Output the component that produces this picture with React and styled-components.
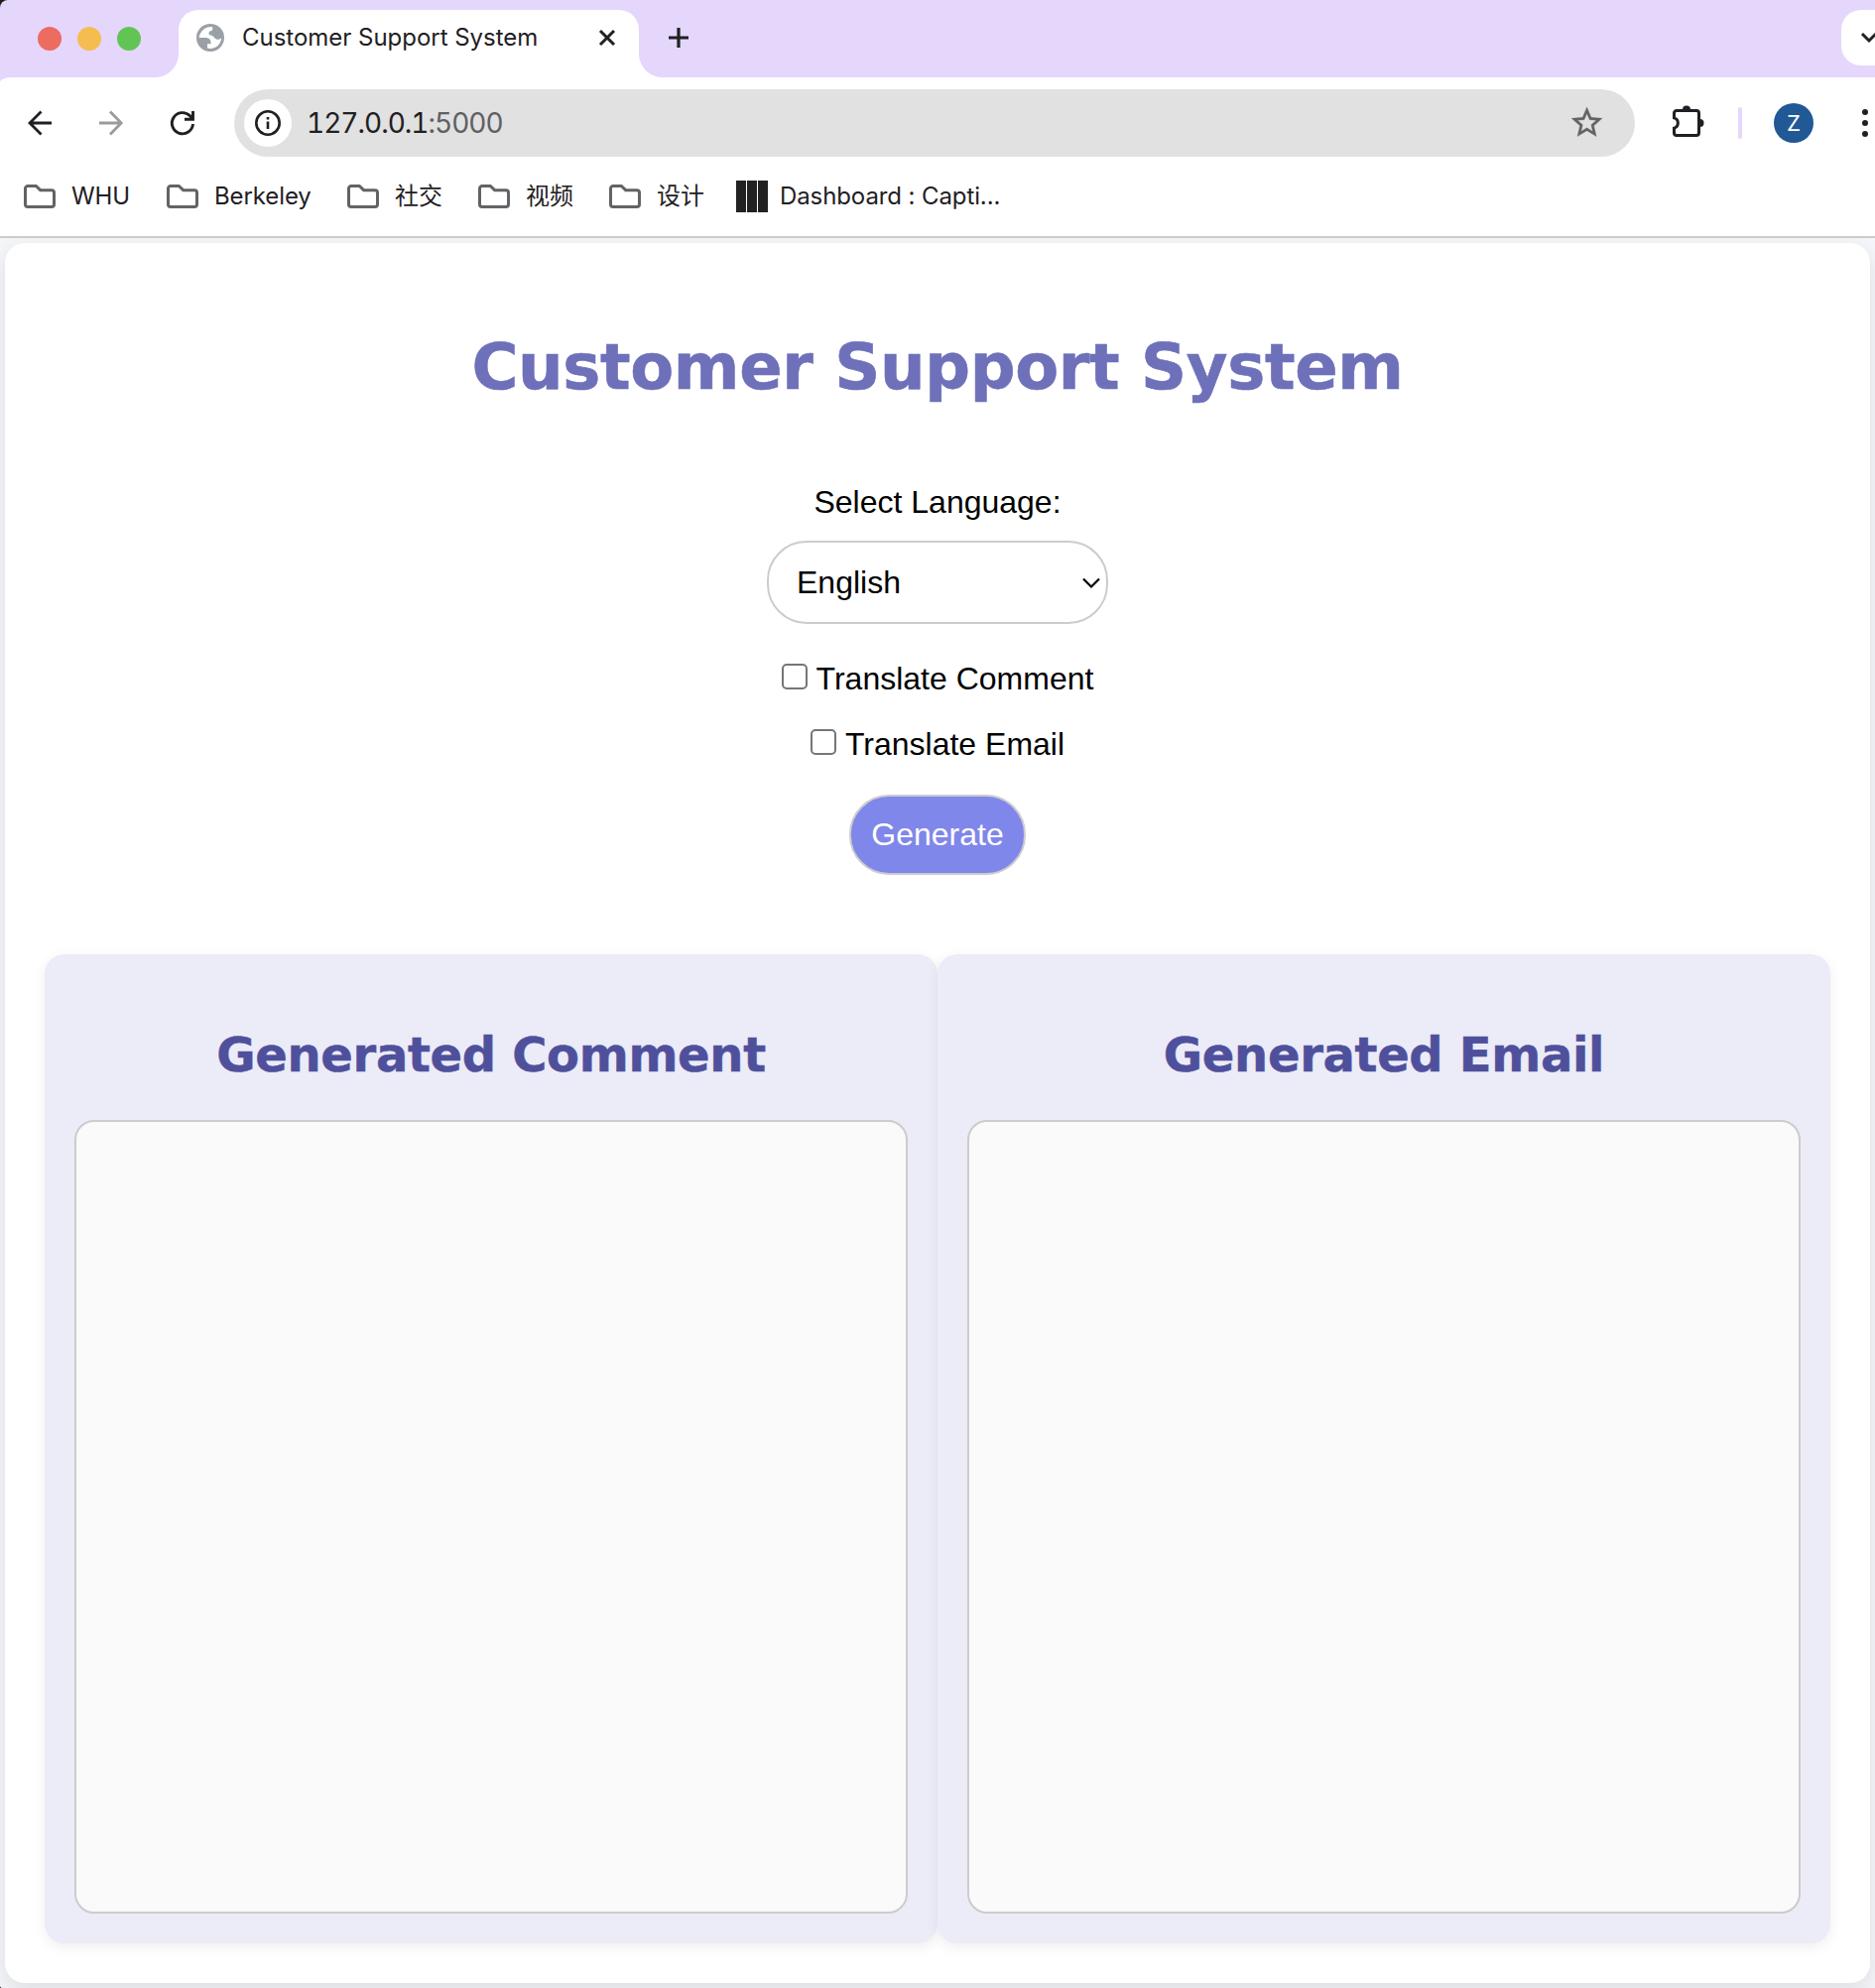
import React, { useState } from 'react';
import styled, { createGlobalStyle } from 'styled-components';

const Global = createGlobalStyle`
  *, *::before, *::after { box-sizing: border-box; }
  body { margin: 0; background: #1c1c1c; color: #000; }
`;

const uiFont = `Inter, "Noto Sans CJK SC", sans-serif`;
const pageFont = `"Liberation Sans", Arial, sans-serif`;
const headFont = `Verdana, "DejaVu Sans", sans-serif`;

const Window = styled.div`
  width: 1890px;
  height: 2004px;
  overflow: hidden;
  display: flex;
  flex-direction: column;
  border-radius: 8px 0 0 3px;
  background: #e5d6fb;
`;

const TabStrip = styled.header`
  height: 78px;
  display: flex;
  align-items: flex-start;
  padding: 10px 0 0 38px;
`;

const Lights = styled.div`
  display: flex;
  gap: 16px;
  margin: 17px 38px 0 0;
`;

const Light = styled.span`
  width: 24px;
  height: 24px;
  border-radius: 50%;
  background: ${(p) => p.$color};
`;

const Tab = styled.div`
  position: relative;
  width: 464px;
  height: 68px;
  display: flex;
  align-items: center;
  padding: 0 24px 12px 18px;
  background: #fff;
  border-radius: 20px 20px 0 0;
  font: 400 24px/30px ${uiFont};
  letter-spacing: -0.02px;
  color: #1f2023;

  &::before,
  &::after {
    content: '';
    position: absolute;
    bottom: 0;
    width: 24px;
    height: 24px;
  }
  &::before {
    left: -24px;
    background: radial-gradient(circle at 0 0, transparent 23.5px, #fff 24.5px);
  }
  &::after {
    right: -24px;
    background: radial-gradient(circle at 100% 0, transparent 23.5px, #fff 24.5px);
  }
`;

const TabTitle = styled.span`
  flex: 1;
  margin-left: 18px;
  white-space: nowrap;
`;

const Glyph = styled.svg`
  display: block;
  flex: none;
  overflow: visible;
`;

const NewTab = styled.div`
  margin: 18px 0 0 30px;
`;

const TabSearch = styled.div`
  width: 34px;
  height: 56px;
  margin-left: auto;
  padding: 22px 0 0 19px;
  border-radius: 20px 0 0 20px;
  background: #fff;
`;

const Toolbar = styled.div`
  height: 92px;
  display: flex;
  align-items: center;
  padding-left: 27px;
  background: #fff;
  border-top-left-radius: 12px 5px;
`;

const NavButtons = styled.div`
  display: flex;
  gap: 46px;
  margin-right: 39px;
`;

const AddressBar = styled.div`
  width: 1412px;
  height: 68px;
  display: flex;
  align-items: center;
  padding: 0 30px 0 10px;
  border-radius: 34px;
  background: #e1e1e1;
`;

const InfoBadge = styled.div`
  width: 48px;
  height: 48px;
  display: grid;
  place-items: center;
  border-radius: 50%;
  background: #fff;
`;

const Url = styled.div`
  flex: 1;
  margin-left: 15px;
  font: 400 28px/34px ${uiFont};
  font-variant-numeric: tabular-nums;
  letter-spacing: -1px;
  color: #1f2023;
`;

const Port = styled.span`
  color: #5f6064;
`;

const Extensions = styled.div`
  margin: 0 0 4px 38px;
`;

const Divider = styled.div`
  width: 4px;
  height: 32px;
  margin: 0 32px 0 34px;
  border-radius: 2px;
  background: #e5d6fb;
`;

const Avatar = styled.div`
  width: 40px;
  height: 40px;
  margin-right: 49px;
  border-radius: 50%;
  background: #215896;
  color: #fff;
  font: 400 22px/41px Roboto, sans-serif;
  text-align: center;
`;

const Bookmarks = styled.nav`
  height: 70px;
  display: flex;
  align-items: flex-start;
  padding: 11px 0 0 24px;
  background: #fff;
  border-bottom: 2px solid #ccc;
`;

const Bookmark = styled.div`
  display: flex;
  align-items: center;
  height: 34px;
  width: ${(p) => p.$width}px;
  gap: ${(p) => p.$gap || 16}px;
  font: 400 24px/34px ${uiFont};
  letter-spacing: -0.1px;
  color: #1f2023;
  white-space: nowrap;
`;

const Bars = styled.span`
  display: flex;
  gap: 1px;
`;

const Bar = styled.span`
  width: 10px;
  height: 32px;
  background: #222;
`;

const Page = styled.main`
  flex: 1;
  padding: 5px;
  overflow: hidden;
  background: #f4f6fa;
`;

const Container = styled.div`
  height: 1754px;
  display: flex;
  flex-direction: column;
  align-items: center;
  padding: 40px;
  border-radius: 20px;
  background: #fff;
  box-shadow: 0 8px 24px rgba(0, 0, 0, 0.1);
  font: 400 32px/36px ${pageFont};
`;

const Title = styled.h1`
  margin: 46px 0 0;
  font: 700 64px/78px ${headFont};
  letter-spacing: -0.36px;
  color: #6e70b9;
  -webkit-text-stroke: 0.6px #6e70b9;
`;

const FieldLabel = styled.label`
  margin-top: 79px;
`;

const SelectBox = styled.div`
  width: 344px;
  height: 84px;
  display: flex;
  align-items: center;
  justify-content: space-between;
  margin-top: 21px;
  padding: 0 6px 0 28px;
  border: 2px solid #ccc;
  border-radius: 40px;
`;

const CheckRow = styled.label`
  display: flex;
  align-items: center;
  margin-top: ${(p) => p.$top}px;
  gap: 9px;
`;

const Checkbox = styled.input`
  appearance: none;
  width: 26px;
  height: 26px;
  margin: 0 0 5px;
  border: 2px solid #767676;
  border-radius: 5px;
  background: #fff;
`;

const GenerateButton = styled.button`
  height: 81px;
  margin: 33px 0 80px;
  padding: 0 20px 2px;
  border: 2px solid #ccc;
  border-radius: 40px;
  background: #8087ea;
  color: #fff;
  font: 400 32px/36px ${pageFont};
`;

const Panels = styled.div`
  width: 100%;
  display: grid;
  grid-template-columns: 1fr 1fr;
`;

const Panel = styled.section`
  height: 997px;
  display: flex;
  flex-direction: column;
  padding: 30px;
  border-radius: 20px;
  background: #ecebf8;
  box-shadow: 0 4px 14px rgba(0, 0, 0, 0.07);
`;

const PanelTitle = styled.h2`
  margin: 42px 0 37px;
  font: 700 48px/58px ${headFont};
  letter-spacing: -0.33px;
  text-align: center;
  color: #4f509c;
  -webkit-text-stroke: 0.5px #4f509c;
`;

const Output = styled.textarea`
  display: block;
  width: 100%;
  height: 800px;
  resize: none;
  outline: none;
  border: 2px solid #ccc;
  border-radius: 20px;
  background: #fafafa;
`;

const Folder = () => (
  <Glyph width="32" height="24" viewBox="0 0 32 24" fill="none" stroke="#626366" strokeWidth="3">
    <path d="M4 1.5h8.3l4.4 4.2H28a2.5 2.5 0 0 1 2.5 2.5V20a2.5 2.5 0 0 1-2.5 2.5H4A2.5 2.5 0 0 1 1.5 20V4A2.5 2.5 0 0 1 4 1.5z" />
  </Glyph>
);

const folders = [
  ['WHU', 144],
  ['Berkeley', 182],
  ['社交', 132],
  ['视频', 132],
  ['设计', 128],
];

function Browser() {
  return (
    <>
      <TabStrip>
        <Lights>
          <Light $color="#ed6b5f" />
          <Light $color="#f5bd4f" />
          <Light $color="#62c454" />
        </Lights>
        <Tab>
          <Glyph width="28" height="28" viewBox="0 0 28 28">
            <circle cx="14" cy="14" r="14" fill="#9aa0a6" />
            <path d="M16 3C9 2.5 3.5 7.5 2.6 14h6.4c3.8 0 5.8 2 5.6 6.3H11v4.3c7.6 1.6 13.5-3 14.3-10.3-1.8 1.9-5.5 2.2-7.2-.3-1.3-2-2.6-2.6-5.1-2.7-1.2-2.7.2-4 2.3-4.2C16.4 6.5 16.5 5 16 3z" fill="#fff" />
          </Glyph>
          <TabTitle>Customer Support System</TabTitle>
          <Glyph width="16" height="16" viewBox="0 0 16 16" stroke="#1f2023" strokeWidth="3">
            <path d="M1 1l14 14M15 1L1 15" />
          </Glyph>
        </Tab>
        <NewTab>
          <Glyph width="20" height="20" viewBox="0 0 20 20" stroke="#1f2023" strokeWidth="3.2">
            <path d="M10 0v20M0 10h20" />
          </Glyph>
        </NewTab>
        <TabSearch>
          <Glyph width="18" height="12" viewBox="0 0 18 12" fill="none" stroke="#1f2023" strokeWidth="3">
            <path d="M2 2l7 7 7-7" />
          </Glyph>
        </TabSearch>
      </TabStrip>
      <Toolbar>
        <NavButtons>
          <Glyph width="26" height="26" viewBox="0 0 26 26" fill="none" stroke="#1f2023" strokeWidth="2.8">
            <path d="M14.5 1.5L3 13l11.5 11.5M3 13h22" />
          </Glyph>
          <Glyph width="26" height="26" viewBox="0 0 26 26" fill="none" stroke="#9b9b9b" strokeWidth="2.8">
            <path d="M12 1.5L23.2 13 12 24.5M23.2 13H1" />
          </Glyph>
          <Glyph width="26" height="26" viewBox="0 0 26 26" fill="none" stroke="#1f2023" strokeWidth="2.9">
            <path d="M23.5 14A10.6 10.6 0 1 1 20.5 5.8L23 8.6" />
            <path d="M23.5 1v8.3H15" />
          </Glyph>
        </NavButtons>
        <AddressBar>
          <InfoBadge>
            <Glyph width="26" height="26" viewBox="0 0 26 26" fill="none" stroke="#1f2023" strokeWidth="2.6">
              <circle cx="13" cy="13" r="11.7" />
              <path d="M13 11.5v7.5M13 7v2.6" />
            </Glyph>
          </InfoBadge>
          <Url>
            127.0.0.1<Port>:5000</Port>
          </Url>
          <Glyph width="37.2" height="37.2" viewBox="0 0 24 24" fill="#626366" stroke="#626366" strokeWidth="0.2">
            <path d="M22 9.24l-7.19-.62L12 2 9.19 8.63 2 9.24l5.46 4.73L5.82 21 12 17.27 18.18 21l-1.63-7.03L22 9.24zM12 15.4l-3.76 2.27 1-4.28-3.32-2.88 4.38-.38L12 6.1l1.71 4.04 4.38.38-3.32 2.88 1 4.28L12 15.4z" />
          </Glyph>
        </AddressBar>
        <Extensions>
          <Glyph width="32" height="32" viewBox="0 0 32 32" fill="none" stroke="#1f2023" strokeWidth="3">
            <path d="M4 5.5h20a2.5 2.5 0 0 1 2.5 2.5v20a2.5 2.5 0 0 1-2.5 2.5H4A2.5 2.5 0 0 1 1.5 28v-4.9a5.3 5.3 0 0 0 0-10.2V8A2.5 2.5 0 0 1 4 5.5z" />
            <path d="M10 4.5a4 4 0 0 1 8 0zM27.5 14a4 4 0 0 1 0 8z" fill="#1f2023" stroke="none" />
          </Glyph>
        </Extensions>
        <Divider />
        <Avatar>Z</Avatar>
        <Glyph width="6" height="28" viewBox="0 0 6 28" fill="#1f2023">
          <circle cx="3" cy="3" r="3" />
          <circle cx="3" cy="14" r="3" />
          <circle cx="3" cy="25" r="3" />
        </Glyph>
      </Toolbar>
      <Bookmarks>
        {folders.map(([name, width]) => (
          <Bookmark key={name} $width={width}>
            <Folder />
            {name}
          </Bookmark>
        ))}
        <Bookmark $gap={12}>
          <Bars>
            <Bar />
            <Bar />
            <Bar />
          </Bars>
          Dashboard : Capti...
        </Bookmark>
      </Bookmarks>
    </>
  );
}

export default function App() {
  const [comment, setComment] = useState('');
  const [email, setEmail] = useState('');
  return (
    <>
      <Global />
      <Window>
        <Browser />
        <Page>
          <Container>
            <Title>Customer Support System</Title>
            <FieldLabel>Select Language:</FieldLabel>
            <SelectBox>
              English
              <Glyph width="18" height="11" viewBox="0 0 18 11" fill="none" stroke="#000" strokeWidth="2.2">
                <path d="M1 1.5l8 8 8-8" />
              </Glyph>
            </SelectBox>
            <CheckRow $top={37}>
              <Checkbox type="checkbox" />
              Translate Comment
            </CheckRow>
            <CheckRow $top={30}>
              <Checkbox type="checkbox" />
              Translate Email
            </CheckRow>
            <GenerateButton>Generate</GenerateButton>
            <Panels>
              <Panel>
                <PanelTitle>Generated Comment</PanelTitle>
                <Output value={comment} onChange={(e) => setComment(e.target.value)} />
              </Panel>
              <Panel>
                <PanelTitle>Generated Email</PanelTitle>
                <Output value={email} onChange={(e) => setEmail(e.target.value)} />
              </Panel>
            </Panels>
          </Container>
        </Page>
      </Window>
    </>
  );
}
